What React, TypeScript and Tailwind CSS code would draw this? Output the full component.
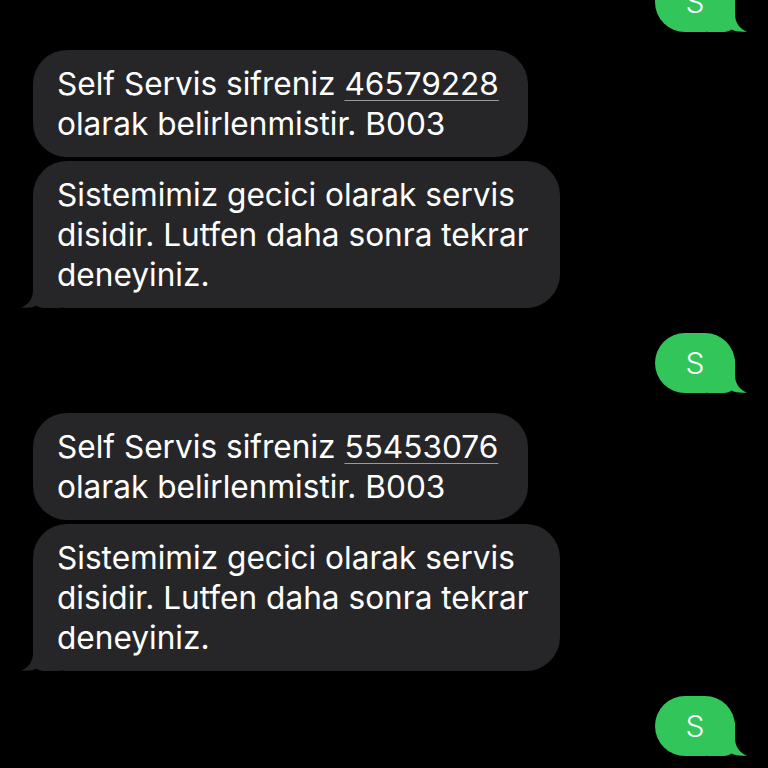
import React from 'react';

function GrayTail() {
  return (
    <svg
      className="absolute bottom-0 left-[-13px]"
      width="40"
      height="34"
      viewBox="0 0 40 34"
      fill="#262628"
    >
      <path d="M13,0 L40,0 L40,34 L24,34 C21,34 18.5,33 16.5,31.5 C13,33.5 7,34 1,33.5 C8,31 13,25 13,16 Z" />
    </svg>
  );
}

function GreenTail() {
  return (
    <svg
      className="absolute bottom-0 right-[-13px] -scale-x-100"
      width="40"
      height="34"
      viewBox="0 0 40 34"
      fill="#32c55a"
    >
      <path d="M13,0 L40,0 L40,34 L24,34 C21,34 18.5,33 16.5,31.5 C13,33.5 7,34 1,33.5 C8,31 13,25 13,16 Z" />
    </svg>
  );
}

function Sent({ className }: { className?: string }) {
  return (
    <div className={`self-end relative ${className ?? ''}`}>
      <div className="relative w-[80px] h-[60px] rounded-[30px] bg-[#32c55a] flex items-center justify-center text-white text-[30px] font-light">
        <span className="relative z-10">S</span>
        <GreenTail />
      </div>
    </div>
  );
}

function Password({ code, className }: { code: string; className?: string }) {
  return (
    <div className={`w-[495px] rounded-[34px] bg-[#262628] pl-6 pt-[14px] pb-[13px] text-white text-[31.6px] leading-[40px] whitespace-nowrap ${className ?? ''}`}>
      Self Servis sifreniz{' '}
      <span className="underline decoration-[#9a9a9e] decoration-1 underline-offset-[5px]">{code}</span>
      <br />
      olarak belirlenmistir. B003
    </div>
  );
}

function Outage({ className }: { className?: string }) {
  return (
    <div className={`relative w-[527px] rounded-[34px] bg-[#262628] pl-6 pt-[14px] pb-[13px] text-white text-[31.6px] leading-[40px] whitespace-nowrap ${className ?? ''}`}>
      <span className="relative z-10">
        Sistemimiz gecici olarak servis
        <br />
        disidir. Lutfen daha sonra tekrar
        <br />
        deneyiniz.
      </span>
      <GrayTail />
    </div>
  );
}

export default function App() {
  return (
    <div
      className="h-screen overflow-hidden bg-black px-[33px] flex flex-col items-start"
      style={{ fontFamily: 'Inter, "Noto Sans", sans-serif' }}
    >
      <Sent className="mt-[-28px]" />
      <Password code="46579228" className="mt-[18px]" />
      <Outage className="mt-[4px]" />
      <Sent className="mt-[25px]" />
      <Password code="55453076" className="mt-[20px]" />
      <Outage className="mt-[4px]" />
      <Sent className="mt-[25px]" />
    </div>
  );
}
